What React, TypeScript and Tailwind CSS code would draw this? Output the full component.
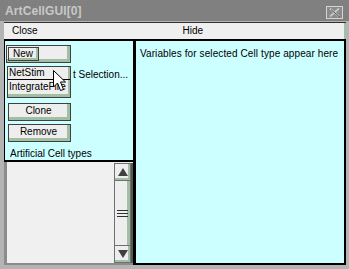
import React from "react";

const face = "bg-[#eeeeee]";
const bevel = "border border-[#404040] shadow-[inset_-3px_-3px_0_#a3bfa3]";

function Btn({ label }: { label: string }) {
  return (
    <div className={`ml-[3px] flex h-[18px] w-[63px] items-center justify-center ${face} ${bevel}`}>
      <span className="pb-[2px] pr-[2px]">{label}</span>
    </div>
  );
}

function Cursor() {
  return (
    <svg width="16" height="24" viewBox="0 0 16 24" className="absolute left-[44px] top-[2px]">
      <path
        d="M1.5 1.5 L1.5 18 L5.5 14 L8.5 21.5 L11.5 20.5 L8.5 13 L13.5 13 Z"
        fill="#ffffff"
        stroke="#000000"
        strokeWidth="1"
        strokeLinejoin="miter"
      />
    </svg>
  );
}

function ScrollArrow({ up }: { up: boolean }) {
  return (
    <div className={`flex h-[18px] items-center justify-center ${face} border border-[#707070] shadow-[inset_-2px_-2px_0_#a3bfa3]`}>
      <svg width="12" height="10" viewBox="0 0 12 10">
        {up ? (
          <path d="M6 1 L11 9 L1 9 Z" fill="#404040" />
        ) : (
          <path d="M1 1 L11 1 L6 9 Z" fill="#404040" />
        )}
      </svg>
    </div>
  );
}

export default function App() {
  return (
    <div className="flex h-[269px] w-[349px] flex-col bg-[#b4b4b4] font-['Liberation_Sans',Arial,sans-serif] text-[10px] leading-none text-black">
      {/* Title bar */}
      <div className="flex h-[21px] items-center bg-[#808080] pl-[5px] pr-[6px]">
        <span className="text-[12px] font-bold tracking-[0.1px] text-[#c8c8c8]">ArtCellGUI[0]</span>
        <svg width="17" height="13" viewBox="0 0 17 13" className="ml-auto mt-[4px]">
          <rect x="0.5" y="0.5" width="16" height="12" fill="#8a8a8a" stroke="#d4d4d4" />
          <path d="M4 2.5 L13 10.5 M13 2.5 L4 10.5" stroke="#c4c4c4" strokeWidth="2" />
          <path d="M5 3.5 L14 11.5" stroke="#5a5a5a" strokeWidth="1" />
        </svg>
      </div>

      <div className="flex flex-1 flex-col pl-[4px] pr-[3px]">
        {/* Button bar */}
        <div className="mt-[1px] flex h-[17px] border-t border-[#303030] bg-[#efefef] shadow-[inset_-2px_0_0_#a3bfa3]">
          <div className="flex flex-1 items-center pl-[8px]">Close</div>
          <div className="flex flex-1 items-center pl-[7px]">Hide</div>
        </div>

        {/* Panels */}
        <div className="flex flex-1 border-t-2 border-black">
          <div className="flex w-[129px] flex-col">
            {/* Cell type panel */}
            <div className="relative flex h-[121px] flex-col border-b-2 border-l border-black bg-[#ccffff] pt-[4px]">
              <div className={`ml-[1px] flex h-[18px] w-[65px] items-center ${face} ${bevel}`}>
                <div className={`ml-[1px] flex h-[14px] w-[31px] items-center justify-center ${face} border border-[#404040] shadow-[inset_-2px_-2px_0_#a3bfa3]`}>
                  <span className="pb-[1px] pr-[1px]">New</span>
                </div>
              </div>
              <div className="mt-[3px] flex h-[18px] items-center pl-[68px]">t Selection...</div>
              <div className="mt-[19px] flex flex-col gap-[3px]">
                <Btn label="Clone" />
                <Btn label="Remove" />
              </div>
              <div className="mt-[7px] pl-[5px]">Artificial Cell types</div>

              {/* Popup menu over the panel */}
              <div className={`absolute left-[2px] top-[25px] flex h-[32px] w-[64px] flex-col ${face} border border-[#404040] shadow-[inset_-2px_-3px_0_#a3bfa3]`}>
                <div className="flex h-[13px] items-center border-b border-black pl-[1px]">NetStim</div>
                <div className="flex h-[14px] items-center pl-[1px]">IntegrateFire</div>
                <Cursor />
              </div>
            </div>

            {/* List box */}
            <div className="flex flex-1 border-l-[3px] border-b-2 border-[#8c8c8c] bg-[#f0f0f0]">
              <div className="flex-1" />
              <div className="mt-[1px] flex w-[19px] flex-col border-r-2 border-[#555555]">
                <ScrollArrow up />
                <div className={`relative flex flex-1 items-center justify-center ${face} border-x border-[#707070] shadow-[inset_-3px_0_0_#a3bfa3]`}>
                  <div className="flex w-[12px] flex-col gap-[2px] pr-[1px]">
                    <div className="h-px bg-[#303030]" />
                    <div className="h-px bg-[#303030]" />
                    <div className="h-px bg-[#303030]" />
                  </div>
                </div>
                <ScrollArrow up={false} />
              </div>
            </div>
          </div>

          {/* Variables panel */}
          <div className="flex-1 border-l-[3px] border-r-2 border-b-2 border-black bg-[#ccffff] pl-[4px] pt-[8px] tracking-[0.1px]">
            Variables for selected Cell type appear here
          </div>
        </div>
        <div className="h-[4px]" />
      </div>
    </div>
  );
}
